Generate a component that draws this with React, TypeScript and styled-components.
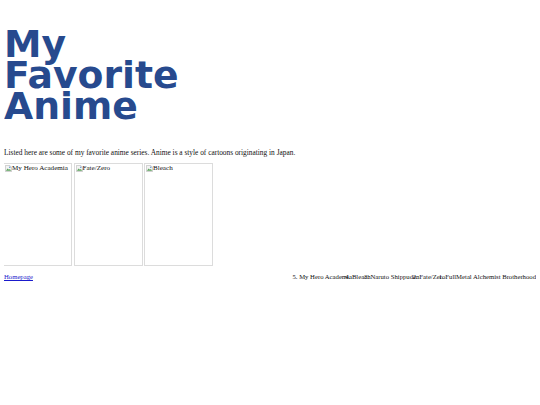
import React from "react";
import styled, { createGlobalStyle } from "styled-components";

const Global = createGlobalStyle`
  html, body { margin: 0; padding: 0; background: #ffffff; }
  body {
    margin: 4px;
    font-family: "Liberation Serif", "Times New Roman", serif;
    font-size: 8px;
    color: #000000;
  }
`;

const Title = styled.h1`
  margin: 25px 0 0 0;
  font-family: "DejaVu Sans", Verdana, sans-serif;
  font-weight: bold;
  font-size: 37.7px;
  line-height: 31px;
  color: #274a8e;
  width: 200px;
`;

const Intro = styled.p`
  margin: 26px 0 5px 0;
  font-size: 7.37px;
  line-height: 10px;
  color: #111111;
`;

const Gallery = styled.div`
  display: flex;
  gap: 1.5px;
  margin-left: -1px;
`;

const Frame = styled.div`
  width: 67px;
  height: 101px;
  border: 1px solid #dcdcdc;
  display: flex;
  align-items: flex-start;
  font-size: 7.1px;
  line-height: 9px;
  color: #111111;
  overflow: hidden;
`;

const BrokenIcon = styled.svg`
  flex: none;
  width: 7px;
  height: 7px;
  margin: 1px 0 0 1px;
`;

const Alt = styled.span`
  white-space: nowrap;
`;

const Footer = styled.footer`
  display: flex;
  justify-content: space-between;
  align-items: flex-start;
  margin-top: 6px;
  font-size: 6.7px;
  line-height: 10px;
  color: #111111;
`;

const HomeLink = styled.a`
  color: #1a1acc;
  text-decoration: underline;
`;

const Rank = styled.ol`
  display: flex;
  margin: 0;
  padding: 0;
  list-style: decimal outside;
`;

const RankItem = styled.li`
  display: list-item;
  white-space: nowrap;
`;

const Broken = () => (
  <BrokenIcon viewBox="0 0 16 16">
    <path d="M1 1h10l4 4v10H1z" fill="#f2f2f2" stroke="#9a9a9a" strokeWidth="1" />
    <path d="M2 13l4-5 3 3 2-2 3 4z" fill="#5aa35a" />
    <circle cx="11" cy="5" r="1.6" fill="#4f87c7" />
  </BrokenIcon>
);

const shows = ["My Hero Academia", "Fate/Zero", "Bleach"];
const ranking = [
  "My Hero Academia",
  "Bleach",
  "Naruto Shippuden",
  "Fate/Zero",
  "FullMetal Alchemist Brotherhood",
];

export default function App() {
  return (
    <>
      <Global />
      <Title>My Favorite Anime</Title>
      <Intro>
        Listed here are some of my favorite anime series. Anime is a style of
        cartoons originating in Japan.
      </Intro>
      <Gallery>
        {shows.map((s) => (
          <Frame key={s}>
            <Broken />
            <Alt>{s}</Alt>
          </Frame>
        ))}
      </Gallery>
      <Footer>
        <HomeLink href="#">Homepage</HomeLink>
        <Rank reversed>
          {ranking.map((r) => (
            <RankItem key={r}>{r}</RankItem>
          ))}
        </Rank>
      </Footer>
    </>
  );
}
